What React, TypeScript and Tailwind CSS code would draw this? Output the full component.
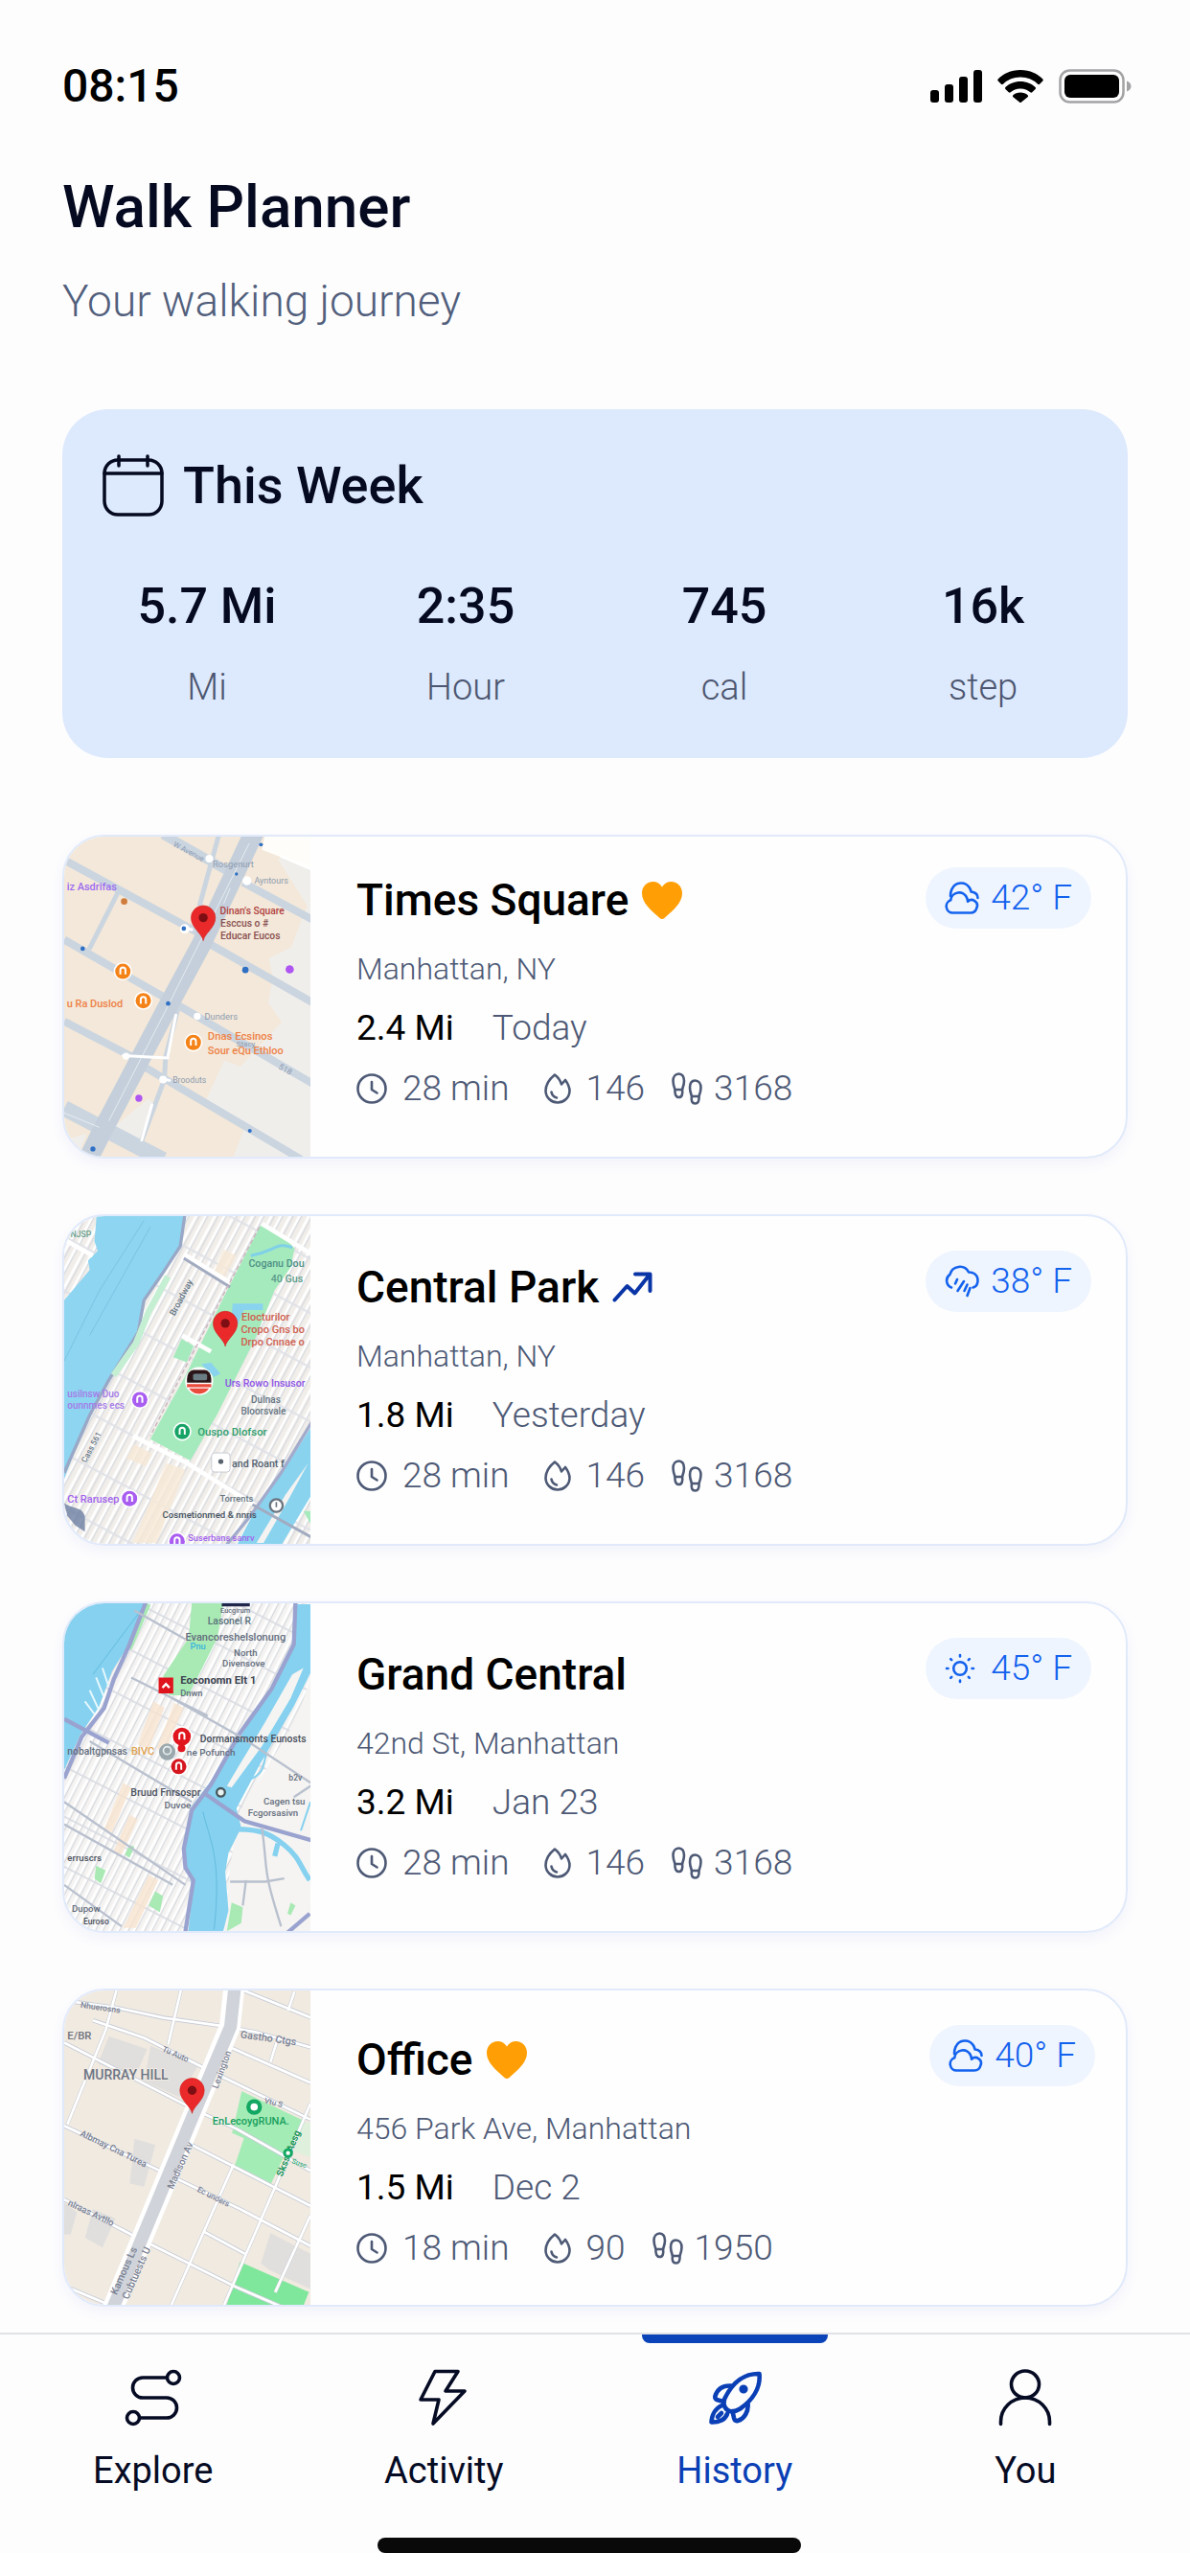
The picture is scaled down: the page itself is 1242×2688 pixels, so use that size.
import type { ReactNode } from "react";

type Weather = "cloudy" | "rain" | "sun";

interface Walk {
  id: string;
  name: string;
  badge?: "favorite" | "trend";
  address: string;
  distance: string;
  date: string;
  duration: string;
  calories: string;
  steps: string;
  weather: Weather;
  temp: string;
  map: ReactNode;
  bodyClass: string;
  pillClass: string;
}

/* ---------- icons ---------- */

function SignalIcon() {
  return (
    <svg viewBox="0 0 54 34" className="h-[34px] w-[54px]" aria-hidden>
      <rect x="0" y="21" width="9" height="13" rx="3" />
      <rect x="15" y="15" width="9" height="19" rx="3" />
      <rect x="30" y="7" width="9" height="27" rx="3" />
      <rect x="45" y="0" width="9" height="34" rx="3" />
    </svg>
  );
}

function WifiIcon() {
  return (
    <svg viewBox="0 0 48 34" className="h-[34px] w-12" aria-hidden>
      <path d="M24 0C34 0 42 4 47.300 9.600a1.500 1.500 0 0 1 0 2l-3.200 3.200a1.500 1.500 0 0 1-2 0A26 26 0 0 0 24 7.600 26 26 0 0 0 5.900 14.800a1.500 1.500 0 0 1-2 0L.7 11.600a1.500 1.500 0 0 1 0-2C6 4 14 0 24 0z" />
      <path d="M24 12c6.500 0 11.800 2.400 15.600 6a1.500 1.500 0 0 1 0 2l-3.300 3.300a1.500 1.500 0 0 1-2 0A15 15 0 0 0 24 19.500a15 15 0 0 0-10.300 3.800 1.500 1.500 0 0 1-2 0L8.400 20a1.500 1.500 0 0 1 0-2C12.200 14.400 17.500 12 24 12z" />
      <path d="M24 23.500c3 0 5.800 1 7.600 2.800a1.400 1.400 0 0 1 0 2l-6.500 5.300a1.600 1.600 0 0 1-2.200 0l-6.500-5.300a1.400 1.400 0 0 1 0-2C18.200 24.500 21 23.500 24 23.500z" />
    </svg>
  );
}

function BatteryIcon() {
  return (
    <svg viewBox="0 0 76 36" className="h-9 w-[76px]" aria-hidden>
      <rect x="1.500" y="1.500" width="66" height="33" rx="10" fill="none" stroke="#a3a3a5" strokeWidth="2.500" />
      <rect x="6" y="6" width="57" height="24" rx="6" />
      <path d="M71 12.500c3 1 4.500 3 4.500 5.500s-1.500 4.500-4.500 5.500z" fill="#a3a3a5" />
    </svg>
  );
}

function CalendarIcon() {
  return (
    <svg viewBox="0 0 64 66" className="h-[66px] w-16" fill="none" stroke="currentColor" strokeWidth="3.500" strokeLinecap="round" aria-hidden>
      <rect x="2" y="6" width="60" height="57" rx="14" />
      <path d="M2 20h60M17 2v10M47 2v10" />
    </svg>
  );
}

function HeartIcon() {
  return (
    <svg viewBox="0 0 42 39" className="h-[39px] w-[42px]" fill="#ff9f05" role="img" aria-label="Favorite">
      <path d="M21 5.500C18.500 1.800 15.200 0 11.500 0 5 0 0 5 0 12c0 10 9 17.500 18.500 26 1.600 1.300 3.400 1.300 5 0C33 29.500 42 22 42 12 42 5 37 0 30.500 0 26.800 0 23.500 1.800 21 5.500z" />
    </svg>
  );
}

function TrendIcon() {
  return (
    <svg viewBox="0 0 42 32" className="h-8 w-[42px]" fill="none" stroke="#0a35a6" strokeWidth="4" strokeLinecap="round" strokeLinejoin="round" role="img" aria-label="Trending">
      <path d="M2.500 29.500 15.500 15l8 7.500L39 3M24 2.500h15.500V20" />
    </svg>
  );
}

function ClockIcon() {
  return (
    <svg viewBox="0 0 32 32" className="size-8" fill="none" stroke="currentColor" strokeWidth="2.600" strokeLinecap="round" strokeLinejoin="round" aria-hidden>
      <circle cx="16" cy="16" r="14.500" />
      <path d="M16 9v8l5.500 3.500" />
    </svg>
  );
}

function FlameIcon() {
  return (
    <svg viewBox="0 0 28 32" className="h-8 w-7" fill="none" stroke="currentColor" strokeWidth="2.600" strokeLinecap="round" strokeLinejoin="round" aria-hidden>
      <path d="M11 1.500c4 3 6 6.500 7 10l4-4.500c3 4 4.500 8 4.500 11.500A12.500 12.500 0 0 1 14 30.500 12.500 12.500 0 0 1 1.500 18.500C1.500 12 6 5.500 11 1.500z" />
      <path d="M7.500 19.500c.5 3 2.500 5.200 5.500 6" />
    </svg>
  );
}

function StepsIcon() {
  return (
    <svg viewBox="0 0 32 34" className="h-[34px] w-8" fill="none" stroke="currentColor" strokeWidth="2.600" strokeLinejoin="round" aria-hidden>
      <path d="M3.500 18C2 14 1.500 12 1.500 9c0-4.500 2.500-7.500 6-7.500s5.500 3 5.500 7.500c0 3.500-1 6-2 9" />
      <path d="M3.500 18l7.500 0c1 5-.5 8-3.500 8s-4.500-3-4-8z" />
      <path d="M28.500 25c1.500-4 2-6 2-9 0-4.500-2.500-7.500-6-7.500S19 11.500 19 16c0 3.500 1 6 2 9" />
      <path d="M28.500 25H21c-1 5 .5 7.500 3.500 7.500s4.500-2.500 4-7.500z" />
    </svg>
  );
}

function WeatherIcon({ kind }: { kind: Weather }) {
  const label = { cloudy: "Cloudy", rain: "Rain", sun: "Sunny" }[kind];
  return (
    <svg viewBox="0 0 36 34" className="h-[34px] w-9" fill="none" stroke="currentColor" strokeWidth="2.600" strokeLinecap="round" strokeLinejoin="round" role="img" aria-label={label}>
      {kind === "cloudy" && (
        <>
          <path d="M8.500 32.500a6.800 6.800 0 0 1-2.300-13.200 8.800 8.800 0 0 1 17-2.200c.6 1.500.8 2.700.8 3.700a5.800 5.800 0 0 1 9.500 6.200c-.8 3.300-3.300 5.500-6.500 5.500z" />
          <path d="M6 15c0-3 .3-5 1.500-7.300A10.500 10.500 0 0 1 26 6.500c.8 1.300 1.200 2.500 1.500 4 4.500.5 7 3 7 6.500" />
        </>
      )}
      {kind === "rain" && (
        <>
          <path d="M7 23.500A7.800 7.800 0 0 1 5.500 9.800 10.500 10.500 0 0 1 25 7.500c6 .2 9.500 3.500 9.500 8.500 0 4-2 6.800-5 7.500" />
          <path d="M13 15l-2 4.500M20 17l-6.500 10M23.500 20.500l-3 6.500M26.500 24l-3 8" />
        </>
      )}
      {kind === "sun" && (
        <>
          <circle cx="16" cy="17" r="6.800" />
          <path d="M16 3v1.500M16 29.500V31M2 17h1.500M28.500 17H30M6.200 7.200l1 1M24.800 25.800l1 1M6.200 26.800l1-1M24.800 8.200l1-1" />
        </>
      )}
    </svg>
  );
}

function RouteIcon() {
  return (
    <svg viewBox="0 0 60 60" className="size-[60px]" fill="none" stroke="currentColor" strokeWidth="3.600" strokeLinecap="round" aria-hidden>
      <circle cx="51" cy="9" r="6.500" />
      <circle cx="9" cy="51" r="6.500" />
      <path d="M44 9H19a10.500 10.500 0 0 0 0 21h25a10.500 10.500 0 0 1 0 21H16" />
    </svg>
  );
}

function BoltIcon() {
  return (
    <svg viewBox="0 0 60 60" className="size-[60px]" fill="none" stroke="currentColor" strokeWidth="3.600" strokeLinejoin="round" aria-hidden>
      <path d="M21 2.500h24L32 23h20L19 57l6-25H6z" />
    </svg>
  );
}

function RocketIcon() {
  return (
    <svg viewBox="0 0 60 60" className="size-[60px]" fill="none" stroke="currentColor" strokeWidth="4.600" strokeLinecap="round" strokeLinejoin="round" aria-hidden>
      <path d="M55.500 5C41 4.500 28 13 19.500 30.500c-2 4.500-1 10 3 12.500s9 1 13-1.500C49 32 57 19 55.500 5z" />
      <path d="M26 17.500c-8-.5-14 3-16.500 10.500-.8 2.600.8 4 3 4.500l6 1.500" />
      <path d="M43.500 36c1 8-3.500 16-10.500 18-2.500.6-3.500-1-4-3l-1.500-7" />
      <path d="M16.500 38c-6 2.500-10.500 9-11 17.500 7.500.5 14-2.500 16.500-8.500M16 46l-4 4" />
      <circle cx="39" cy="21" r="2.300" fill="currentColor" />
    </svg>
  );
}

function PersonIcon() {
  return (
    <svg viewBox="0 0 60 60" className="size-[60px]" fill="none" stroke="currentColor" strokeWidth="3.600" strokeLinecap="round" aria-hidden>
      <ellipse cx="30" cy="16" rx="14.500" ry="14" />
      <path d="M4.500 57.500V55a25.500 25 0 0 1 51 0v2.500" />
    </svg>
  );
}

/* ---------- map thumbnails ---------- */

function MapFrame({ viewBox, label, children }: { viewBox: string; label: string; children: ReactNode }) {
  return (
    <svg viewBox={viewBox} preserveAspectRatio="xMidYMid slice" className="absolute inset-0 size-full font-['Roboto',sans-serif]" role="img" aria-label={label}>
      {children}
    </svg>
  );
}

function Pin({ x, y }: { x: number; y: number }) {
  return (
    <g>
      <path d={`M${x} ${y + 72}c-3-22-38-40-38-72a38 38 0 0 1 76 0c0 32-35 50-38 72z`} fill="#ea2a2a" stroke="#d11f1f" strokeWidth="2" />
      <circle cx={x} cy={y} r="14" fill="#7d0f14" />
    </g>
  );
}

function Spot({ x, y, color, r = 24 }: { x: number; y: number; color: string; r?: number }) {
  return (
    <g>
      <circle cx={x} cy={y} r={r + 5} fill="#fff" />
      <circle cx={x} cy={y} r={r} fill={color} />
      <path d={`M${x - 8} ${y + 10}v-14a8 8 0 0 1 16 0v14`} fill="none" stroke="#fff" strokeWidth="6" />
    </g>
  );
}

function TimesSquareMap() {
  return (
    <MapFrame viewBox="20 36 772 1009" label="Map of Times Square">
      <path fill="#f3e8d9" d="M0 0h820v1080H0z" />
      <path fill="#f0eeeb" d="M690 110l110-40v1000H540l42-110-115-100 55-120 50 20 130-140-42-60 14-80-12-60 70-35 50-130zM285 860l20 20-45 110-85-40zM20 990l70-20-30 80H20z" />
      <path fill="#fffdf9" d="M650 30h150v112l-160-62z" />
      <g fill="none" stroke="#cbd5e0" strokeWidth="24">
        <path d="M20 112 440 340M20 362 350 552M20 618 250 738M580 182l220 118M460 366l340 194M375 566l425 248M262 755l500 295" />
        <path d="M330 32 550 156" strokeWidth="30" />
        <path d="M20 890 330 1052" strokeWidth="50" />
        <path d="M188 215 98 392M504 36l-60 220M376 580l-38 150-4 70-74 200" strokeWidth="15" />
      </g>
      <path fill="none" stroke="#c4cfdb" strokeWidth="62" d="M618 20 448 380 350 562 140 960l-50 100" />
      <g fill="none" stroke="#e6ebf1" strokeWidth="3">
        <path d="M600 60 335 590 160 930M540 200l-20 50M20 905l110 45" />
      </g>
      <g fill="none" stroke="#fff" strokeWidth="9" strokeLinecap="round">
        <path d="M205 725l140 8M345 728l25-130M295 880l-32 110M700 100l90 38M420 330l-25-5M330 798l20 5" />
      </g>
      <g fontSize="30" fill="#8d9bb0">
        <text x="360" y="68" transform="rotate(28 360 68)" fontSize="24">W Avenue</text>
        <text x="486" y="134" fontSize="28">Rosgenurt</text>
        <text x="616" y="187" fontSize="27">Ayntours</text>
        <text x="460" y="612" fontSize="28">Dunders</text>
        <text x="360" y="810" fontSize="26">Brooduts</text>
        <text x="560" y="696" fontSize="24">Stacy</text>
        <text x="690" y="765" transform="rotate(30 690 765)" fontSize="26">518</text>
      </g>
      <g fontWeight="500">
        <text x="28" y="208" fontSize="33" fill="#9d6bf0">iz Asdrifas</text>
        <text x="508" y="283" fontSize="31" fill="#b0413f">Dinan's Square</text>
        <text x="510" y="322" fontSize="31" fill="#8a4f50">Esccus o #</text>
        <text x="510" y="360" fontSize="31" fill="#8a4f50">Educar Eucos</text>
        <text x="28" y="573" fontSize="33" fill="#ee8146">u Ra Duslod</text>
        <text x="470" y="675" fontSize="34" fill="#ee8146">Dnas Ecsinos</text>
        <text x="470" y="720" fontSize="33" fill="#ee8146">Sour eQu Ethloo</text>
      </g>
      <Spot x={204} y={461} color="#f58216" />
      <Spot x={268} y={553} color="#f58216" />
      <Spot x={425} y={684} color="#f58216" />
      <g fill="#fff"><circle cx="475" cy="108" r="12" /><circle cx="593" cy="177" r="14" /><circle cx="398" cy="328" r="15" /><circle cx="437" cy="602" r="11" /><circle cx="214" cy="727" r="11" /><circle cx="330" cy="800" r="12" /></g>
      <g fill="#2f70c4"><circle cx="637" cy="64" r="6" /><circle cx="560" cy="156" r="5" /><circle cx="395" cy="327" r="7" /><circle cx="346" cy="562" r="7" /><circle cx="78" cy="390" r="7" /><circle cx="588" cy="457" r="10" /><circle cx="110" cy="1018" r="8" /><circle cx="602" cy="961" r="6" /></g>
      <circle cx="208" cy="242" r="10" fill="#d07c3c" />
      <g fill="#ae55f2"><circle cx="727" cy="455" r="13" /><circle cx="254" cy="859" r="11" /></g>
      <Pin x={456} y={293} />
    </MapFrame>
  );
}

function CentralParkMap() {
  return (
    <MapFrame viewBox="20 26 772 1027" label="Map of Central Park">
      <defs>
        <pattern id="park-grid" width="52" height="150" patternUnits="userSpaceOnUse" patternTransform="rotate(28)">
          <path fill="#f1eeea" d="M0 0h52v150H0z" />
          <path d="M5 0v150M31 0v150" stroke="#fff" strokeWidth="8" />
          <path d="M11 0v150M40 0v150" stroke="#cfd3dc" strokeWidth="3" />
          <path d="M0 70h52" stroke="#dfe1e7" strokeWidth="6" />
        </pattern>
      </defs>
      <path fill="url(#park-grid)" d="M0 0h820v1080H0z" />
      <path fill="#f6e8d6" opacity=".8" d="M340 800l60 20-90 230h-75zM520 130l40 20-45 80-30-20zM240 740l55 30-20 40-60-25z" />
      <path fill="#8ed5f1" d="M122 20h282l-25 110-50 80-60 80-22 100-95 165-55 95-77 200V290l80-95-5-30 30-30-10-30z" />
      <path d="M270 40 130 260 20 480M290 60 100 400" stroke="#78c3e3" strokeWidth="3" fill="none" />
      <path d="M20 830 100 650l60-110 92-150 18-100 62-90 52-80 16-110" stroke="#98a8c6" strokeWidth="10" fill="none" />
      <path d="M345 215l-60 110-40 100-70 100" stroke="#c4efd3" strokeWidth="20" fill="none" />
      <path fill="#a5eabd" d="M635 55l62 22 45 50-12 60-50 70-60 150-120 240-85 145-125-67 110-200 120-245zM388 410l38 22-22 52-42-16zM770 950l22 0v40z" />
      <path d="M735 125c-50-20-50 10-130 25" stroke="#7fd0e8" strokeWidth="9" fill="none" />
      <path fill="#89d3ef" d="M548 300h95v20h-60l-25 60-15-15zM450 490l30-5 30 35-20 10zM792 690l-70 110-110 160-50 95h140l90-150z" />
      <path fill="#f4f3f1" d="M785 800l-60 110-80 140h-22l90-150z" />
      <path d="M800 665 700 830 600 970l-70 85" stroke="#a2abcb" strokeWidth="10" fill="none" />
      <path d="M395 145l145 90M640 50l155 95M235 715l170 85 210 130M20 100l90 50M390 400l90 50" stroke="#fff" strokeWidth="14" fill="none" />
      <path d="M610 930l190 105M395 158l145 90" stroke="#a2abc0" strokeWidth="9" fill="none" />
      <path d="M632 60 520 270 400 500 290 715" stroke="#c9b3bb" strokeWidth="4" strokeDasharray="14 9" fill="none" />
      <g fill="#667583" fontSize="32" fontWeight="500">
        <text x="40" y="92" fontSize="26" fill="#6ba08c">NJSP</text>
        <text x="598" y="184" fill="#4d8f85">Coganu Dou</text>
        <text x="668" y="232" fill="#5c9c8b">40 Gus</text>
        <text x="366" y="340" transform="rotate(-62 366 340)" fontSize="28">Broadway</text>
        <text x="88" y="800" transform="rotate(-62 88 800)" fontSize="25">Cass 561</text>
        <text x="606" y="611" fontSize="30">Dulnas</text>
        <text x="574" y="648" fontSize="30">Bloorsvale</text>
        <text x="546" y="814" fill="#51606f">and Roant f</text>
        <text x="508" y="922" fontSize="28">Torrents</text>
        <text x="328" y="971" fontSize="29" fill="#445260">Cosmetionmed &amp; nnris</text>
      </g>
      <g fontSize="33" fontWeight="500">
        <text x="576" y="354" fill="#d0604f">Elocturilor</text>
        <text x="574" y="393" fill="#d0604f">Cropo Gns bo</text>
        <text x="574" y="432" fill="#d0604f">Drpo Cnnae o</text>
        <text x="524" y="562" fontSize="32" fill="#8d52e6">Urs Rowo Insusor</text>
        <text x="30" y="595" fontSize="30" fill="#a57ae8">usilnsw Duo</text>
        <text x="30" y="630" fontSize="30" fill="#a57ae8">ounnmes ecs</text>
        <text x="30" y="924" fill="#a263ec">Ct Rarusep</text>
        <text x="408" y="1043" fontSize="28" fill="#a263ec">Suserbans sanrv</text>
        <text x="438" y="714" fontSize="34" fill="#2f9d6c">Ouspo Dlofsor</text>
      </g>
      <Spot x={257} y={601} color="#a95df0" />
      <Spot x={225} y={911} color="#a95df0" />
      <Spot x={374} y={1045} color="#a95df0" />
      <Spot x={390} y={701} color="#16a365" />
      <rect x="482" y="768" width="58" height="60" rx="10" fill="#fff" stroke="#c8ccd2" strokeWidth="3" />
      <circle cx="511" cy="795" r="8" fill="#59636e" />
      <circle cx="685" cy="933" r="20" fill="#fff" stroke="#6b747f" strokeWidth="7" />
      <path d="M685 922v16" stroke="#6b747f" strokeWidth="5" />
      <circle cx="443" cy="543" r="44" fill="#fff" />
      <path d="M405 548v-12a20 28 0 0 1 20-28h36a20 28 0 0 1 20 28v12z" fill="#2a1618" />
      <rect x="424" y="520" width="44" height="20" rx="5" fill="#6a7c84" />
      <path d="M405 552h76v10h-76zM412 566h62c-8 12-18 17-31 17s-24-5-31-17z" fill="#ea4b3c" />
      <path d="M20 925c30 20 55 10 65 40v50l-30-20-25-30z" fill="#63779c" opacity=".75" />
      <Pin x={525} y={362} />
    </MapFrame>
  );
}

function GrandCentralMap() {
  return (
    <MapFrame viewBox="20 36 772 1030" label="Map of Grand Central">
      <defs>
        <pattern id="midtown-grid" width="46" height="140" patternUnits="userSpaceOnUse" patternTransform="rotate(27)">
          <path fill="#f4f3f1" d="M0 0h46v140H0z" />
          <path d="M5 0v140M28 0v140" stroke="#fff" strokeWidth="8" />
          <path d="M11 0v140M36 0v140" stroke="#d2d5dc" strokeWidth="3" />
          <path d="M0 60h46" stroke="#d8dbe2" strokeWidth="5" />
        </pattern>
      </defs>
      <path fill="url(#midtown-grid)" d="M0 0h820v1090H0z" />
      <path fill="#f8e4cf" opacity=".8" d="M300 345l35 20-50 130-35-15zM365 350l30 15-60 140-25-15zM205 600l25 15-60 140-25-10zM285 890l30 15-70 150h-40zM225 700l25 15-50 110-25-10z" />
      <path fill="#f5f4f2" d="M800 250v840H520l20-230 30-170 180-290z" />
      <path fill="#85d1ef" d="M80 20h200l-40 120-70 110-40 110-60 90-50 110V100zM745 40h60v190l-65 130-105 180-75 140 15 60-40 80-10 60 10 120-20 80H408l15-150-30-110 30-150 60-80 80-120 120-190 60-130z" />
      <path d="M455 690c20 90 60 140 35 370M260 60 110 260" fill="none" stroke="#63bce0" strokeWidth="3" />
      <path fill="#f4f4f2" d="M770 240l-35 20-85 150-120 200 15 5 95-130 90-150z" />
      <path fill="none" stroke="#85d1ef" strokeWidth="16" d="M550 745c80 0 110 10 160 50s50 70 80 110M690 790l-10 40" />
      <path fill="none" stroke="#85d1ef" strokeWidth="6" d="M600 590c80-30 20-90 100-180M792 660l-30 90" />
      <path fill="#a9e9b4" d="M420 36h100l-20 110-40 80-50 100h-60l-20-60 80-120zM305 940l25 15-10 50-35-20zM120 860l30 15-15 40-20-15zM225 795l15 5-15 35-15-10zM545 975l35 15-5 50-45 25zM730 975l15 10-15 30-10-5z" />
      <path fill="none" stroke="#a9e9b4" strokeWidth="14" d="M285 40 225 180" />
      <g stroke="#9aa3cf" strokeWidth="13" fill="none">
        <path d="M745 36l-5 130-70 140-100 140-90 160-60 80-25 120 5 60 25 40-25 160M275 36l-50 130-50 110-30 90-70 90-55 130" />
        <path d="M20 400l140 75M455 630l130 90 210 60M790 1010l-70 60" />
      </g>
      <path d="M350 330l230 130 220 145-60 40M20 660l380 260M20 730l340 190M100 470l320 190M230 270l240 120M240 60l160 90M20 920l180 130M540 910h110l60-10M640 740c20 150 0 120 60 310M580 985l10-80" fill="none" stroke="#b9c0ce" strokeWidth="7" />
      <g stroke="#e6f7fd" strokeWidth="6" fill="none">
        <path d="M85 345l30 40M100 310l28 60M120 270l24 60M140 240l20 60" />
      </g>
      <path d="M514 34h88v13h-88z" fill="#20274a" />
      <g fill="#636d7d" fontSize="31" fontWeight="500">
        <text x="510" y="66" fontSize="22">Eucgirum</text>
        <text x="470" y="104" fill="#57707a">Lasonel R</text>
        <text x="400" y="154" fontSize="33">Evancoreshelslonung</text>
        <text x="415" y="182" fontSize="28" fill="#39b4dc">Pnu</text>
        <text x="552" y="204" fontSize="29">North</text>
        <text x="516" y="236" fontSize="29">Divensove</text>
        <text x="384" y="290" fontSize="34" fontWeight="700" fill="#3c4350">Eoconomn EIt 1</text>
        <text x="384" y="330" fontSize="28">Dnwn</text>
        <text x="446" y="474" fontSize="31" fill="#454c59">Dormansmonts Eunosts</text>
        <text x="30" y="512" fontSize="31">nobaltgpnsas</text>
        <text x="230" y="512" fontSize="33" fill="#e2a350">BIVC</text>
        <text x="404" y="514" fontSize="30">ne Pofunch</text>
        <text x="228" y="640" fontSize="32" fill="#4a505d">Bruud Fnrsospr</text>
        <text x="334" y="680" fontSize="30">Duvoe</text>
        <text x="645" y="668" fontSize="29">Cagen tsu</text>
        <text x="596" y="704" fontSize="29">Fcgorsasivn</text>
        <text x="724" y="594" fontSize="26">b2v</text>
        <text x="30" y="844" fontSize="29" fill="#4a505d">erruscrs</text>
        <text x="44" y="1004" fontSize="29">Dupow</text>
        <text x="80" y="1044" fontSize="26" fill="#4a505d">Euroso</text>
      </g>
      <path fill="#e0141d" d="M316 270h46v50h-46z" />
      <path d="M328 302l11-12 11 12" fill="none" stroke="#fff" strokeWidth="7" />
      <circle cx="343" cy="503" r="26" fill="#9aa8ad" />
      <circle cx="343" cy="499" r="12" fill="none" stroke="#e8eeee" strokeWidth="5" />
      <Spot x={389} y={455} color="#e0141d" r={28} />
      <Spot x={379} y={549} color="#d5161f" />
      <circle cx="388" cy="492" r="12" fill="#e0141d" />
      <circle cx="511" cy="630" r="13" fill="#e9f2f1" stroke="#47575c" strokeWidth="7" />
    </MapFrame>
  );
}

function OfficeMap() {
  return (
    <MapFrame viewBox="20 32 770 992" label="Map of Murray Hill">
      <path fill="#f0eae1" d="M0 0h820v1060H0z" />
      <path fill="#dddcdc" opacity=".8" d="M160 180l120 40-40 90-115-45zM290 210l150 60-60 100-110-50zM240 500l65 20-35 130-45-10zM110 720l70 30-40 90-55-30zM20 700l40 30-20 70H20zM665 795l125 65v110l-130-60-25-20z" />
      <path fill="#a4ecb6" d="M575 352l190 90-50 115-170-75zM585 490l125 60-45 95-115-50z" />
      <path fill="#7fe79b" d="M570 885l215 95-20 50H525z" />
      <path fill="#dff0dc" d="M765 450h30v110l-55-20z" />
      <g fill="none" stroke="#c6cbd6">
        <path d="M20 68l160 22 150 32 180 25 110 20 180 50M110 130l160 55 190 95 330 160M20 200l410 210 130 60 230 130M20 460l320 150 230 110 220 115M20 690l220 115 320 160 150 65M20 960l130 55M580 36l210 85M540 215l250 110M420 520l370 190M455 790l130 70" strokeWidth="13" />
        <path d="M185 30 150 160 30 455M385 36l-40 170M790 390 680 650 520 1020M550 580 355 1020M740 40l-20 60M790 740l-110 240M690 180l-25 80" strokeWidth="11" />
      </g>
      <g fill="none" stroke="#fff" strokeWidth="8">
        <path d="M20 68l160 22 150 32 180 25 110 20 180 50M110 130l160 55 190 95 330 160M20 200l410 210 130 60 230 130M20 460l320 150 230 110 220 115M20 690l220 115 320 160 150 65M20 960l130 55M580 36l210 85M540 215l250 110M420 520l370 190M455 790l130 70" />
        <path d="M185 30 150 160 30 455M385 36l-40 170M790 390 680 650 520 1020M550 580 355 1020M740 40l-20 60M790 740l-110 240M690 180l-25 80" />
      </g>
      <path fill="none" stroke="#fff" strokeWidth="66" d="M552 20l-14 130-70 170-150 360-150 360" />
      <path fill="none" stroke="#d0d4da" strokeWidth="40" d="M554 20l-14 130-72 170-150 360-150 360" />
      <g fill="#7a8194" fontSize="28" fontWeight="500">
        <text x="70" y="90" transform="rotate(8 70 90)" fontSize="26">Nhuerosns</text>
        <text x="30" y="190" fontSize="34" fill="#6f737c">E/BR</text>
        <text x="325" y="226" transform="rotate(24 325 226)" fontSize="25">Tu Auto</text>
        <text x="570" y="184" transform="rotate(8 570 184)" fontSize="32">Gastho Ctgs</text>
        <text x="500" y="345" transform="rotate(-70 500 345)">Lexington</text>
        <text x="360" y="660" transform="rotate(-66 360 660)" fontSize="30">Madison Av</text>
        <text x="68" y="490" transform="rotate(26 68 490)">Albmay Cna Turea</text>
        <text x="30" y="708" transform="rotate(25 30 708)">nlraas Avtllo</text>
        <text x="434" y="664" transform="rotate(27 434 664)" fontSize="25">Ec unders</text>
        <text x="184" y="990" transform="rotate(-66 184 990)" fontSize="32">Kamous Ls</text>
        <text x="220" y="1004" transform="rotate(-66 220 1004)" fontSize="32">Cubtuests U</text>
        <text x="645" y="388" transform="rotate(14 645 388)" fontSize="24">Vtu S</text>
        <text x="484" y="455" fontSize="33" fill="#17a05c">EnLecoygRUNA.</text>
        <text x="702" y="620" transform="rotate(-68 702 620)" fontSize="30" fontWeight="700" fill="#199458">Sksst Aesg</text>
        <text x="730" y="576" transform="rotate(20 730 576)" fontSize="22" fill="#3fae78">Susc</text>
      </g>
      <text x="80" y="315" fontSize="42" fontWeight="500" fill="#6d7585" stroke="#f0eae1" strokeWidth="6" paintOrder="stroke">MURRAY HILL</text>
      <circle cx="614" cy="401" r="18" fill="#fff" stroke="#12a762" strokeWidth="13" />
      <circle cx="720" cy="545" r="11" fill="#fff" stroke="#12a762" strokeWidth="9" />
      <Pin x={420} y={349} />
    </MapFrame>
  );
}

/* ---------- data ---------- */

const WEEK_STATS = [
  { value: "5.7 Mi", label: "Mi" },
  { value: "2:35", label: "Hour" },
  { value: "745", label: "cal" },
  { value: "16k", label: "step" },
];

const WALKS: Walk[] = [
  {
    id: "times-square",
    name: "Times Square",
    badge: "favorite",
    address: "Manhattan, NY",
    distance: "2.4 Mi",
    date: "Today",
    duration: "28 min",
    calories: "146",
    steps: "3168",
    weather: "cloudy",
    temp: "42° F",
    map: <TimesSquareMap />,
    bodyClass: "pt-9 pb-[50px]",
    pillClass: "mt-8 mr-9",
  },
  {
    id: "central-park",
    name: "Central Park",
    badge: "trend",
    address: "Manhattan, NY",
    distance: "1.8 Mi",
    date: "Yesterday",
    duration: "28 min",
    calories: "146",
    steps: "3168",
    weather: "rain",
    temp: "38° F",
    map: <CentralParkMap />,
    bodyClass: "pt-11 pb-[50px]",
    pillClass: "mt-9 mr-9",
  },
  {
    id: "grand-central",
    name: "Grand Central",
    address: "42nd St, Manhattan",
    distance: "3.2 Mi",
    date: "Jan 23",
    duration: "28 min",
    calories: "146",
    steps: "3168",
    weather: "sun",
    temp: "45° F",
    map: <GrandCentralMap />,
    bodyClass: "pt-11 pb-[50px]",
    pillClass: "mt-9 mr-9",
  },
  {
    id: "office",
    name: "Office",
    badge: "favorite",
    address: "456 Park Ave, Manhattan",
    distance: "1.5 Mi",
    date: "Dec 2",
    duration: "18 min",
    calories: "90",
    steps: "1950",
    weather: "cloudy",
    temp: "40° F",
    map: <OfficeMap />,
    bodyClass: "pt-[42px] pb-[38px]",
    pillClass: "mt-9 mr-8",
  },
];

const TABS = [
  { name: "Explore", icon: <RouteIcon /> },
  { name: "Activity", icon: <BoltIcon /> },
  { name: "History", icon: <RocketIcon />, active: true },
  { name: "You", icon: <PersonIcon /> },
];

/* ---------- sections ---------- */

function StatusBar() {
  return (
    <div className="flex h-[60px] items-center justify-between text-black">
      <span className="text-[48px] leading-[60px] font-medium">08:15</span>
      <div className="-mr-1 flex items-center gap-4">
        <SignalIcon />
        <WifiIcon />
        <BatteryIcon />
      </div>
    </div>
  );
}

function WeekSummary() {
  return (
    <section className="mt-[85px] rounded-[48px] bg-[#dde9fc] px-4 pt-11 pb-12">
      <div className="flex items-center gap-5 px-[26px]">
        <CalendarIcon />
        <h2 className="text-[54px] leading-[72px] font-medium">This Week</h2>
      </div>
      <dl className="mt-[54px] grid grid-cols-4">
        {WEEK_STATS.map((s) => (
          <div key={s.label} className="flex flex-col-reverse items-center gap-[22px]">
            <dt className="text-[38px] leading-[52px] font-light text-[#4c5670]">{s.label}</dt>
            <dd className="text-[52px] leading-[72px] font-medium">{s.value}</dd>
          </div>
        ))}
      </dl>
    </section>
  );
}

function WalkCard({ walk }: { walk: Walk }) {
  return (
    <li className="flex overflow-hidden rounded-[44px] border-2 border-[#e1eafb] bg-[#fefefe] shadow-[0_6px_14px_rgba(60,90,180,0.06)]">
      <div className="relative w-[257px] shrink-0">{walk.map}</div>
      <div className={`flex min-w-0 flex-1 flex-col gap-[22px] pl-12 ${walk.bodyClass}`}>
        <div className="flex items-center gap-[14px]">
          <h3 className="text-[46px] leading-[60px] font-medium text-black">{walk.name}</h3>
          {walk.badge === "favorite" && <HeartIcon />}
          {walk.badge === "trend" && <TrendIcon />}
        </div>
        <p className="text-[32px] leading-10 font-light text-[#4d5975]">{walk.address}</p>
        <p className="flex gap-10 text-[37px] leading-10">
          <span className="text-black">{walk.distance}</span>
          <span className="font-light text-[#4d5975]">{walk.date}</span>
        </p>
        <div className="flex items-center gap-7 text-[37px] leading-[42px] font-light text-[#4d5975]">
          <span className="mr-2 flex items-center gap-4">
            <ClockIcon />
            {walk.duration}
          </span>
          <span className="flex items-center gap-4">
            <FlameIcon />
            {walk.calories}
          </span>
          <span className="flex items-center gap-3">
            <StepsIcon />
            {walk.steps}
          </span>
        </div>
      </div>
      <div className={`flex h-16 shrink-0 items-center gap-3 rounded-full bg-[#eff5fe] px-5 text-[37px] text-[#1362ee] ${walk.pillClass}`}>
        <WeatherIcon kind={walk.weather} />
        <span className="font-light">{walk.temp}</span>
      </div>
    </li>
  );
}

function TabBar() {
  return (
    <nav className="mt-[27px] border-t-2 border-[#e1e2e6] pr-5 pl-2" aria-label="Main">
      <ul className="grid grid-cols-4">
        {TABS.map((t) => (
          <li key={t.name}>
            <button
              type="button"
              aria-current={t.active ? "page" : undefined}
              className={`relative flex w-full flex-col items-center gap-5 pt-9 ${t.active ? "text-[#0a3fb5]" : "text-[#060b24]"}`}
            >
              {t.active && <span className="absolute top-0 h-[9px] w-[194px] rounded-b-lg bg-[#0a44b8]" />}
              {t.icon}
              <span className="text-[38px] leading-[52px]">{t.name}</span>
            </button>
          </li>
        ))}
      </ul>
      <div className="mx-auto mt-11 mb-[22px] h-4 w-[442px] rounded-full bg-[#090909]" />
    </nav>
  );
}

export default function App() {
  return (
    <div className="bg-[#fdfdfe] font-['Roboto','Liberation_Sans',sans-serif] text-[#050a20]">
      <main className="px-[65px] pt-[60px]">
        <StatusBar />
        <h1 className="mt-[60px] text-[62px] leading-[72px] font-medium">Walk Planner</h1>
        <p className="mt-[34px] text-[46px] leading-[56px] font-light text-[#525f7c]">Your walking journey</p>
        <WeekSummary />
        <ul className="mt-20 flex flex-col gap-[58px]">
          {WALKS.map((w) => (
            <WalkCard key={w.id} walk={w} />
          ))}
        </ul>
      </main>
      <TabBar />
    </div>
  );
}
